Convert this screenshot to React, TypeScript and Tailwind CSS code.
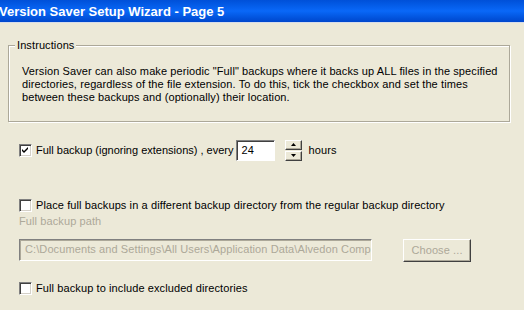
import { useState } from "react"

function Check({ checked, onClick }: { checked: boolean; onClick?: () => void }) {
    return (
        <button
            onClick={onClick}
            className="w-[13px] h-[13px] shrink-0 bg-white border border-t-[#808080] border-l-[#808080] border-b-white border-r-white shadow-[inset_1px_1px_0_#404040,inset_-1px_-1px_0_#d4d0c8] flex items-center justify-center"
        >
            {checked && (
                <svg width="7" height="7" viewBox="0 0 7 7">
                    <path d="M0 2 L2 4 L6 0 L6 2 L2 6 L0 4 Z" fill="#000" />
                </svg>
            )}
        </button>
    )
}

function Arrow({ up }: { up?: boolean }) {
    return (
        <svg width="5" height="3" viewBox="0 0 5 3">
            <path d={up ? "M2.5 0 L5 3 L0 3 Z" : "M0 0 L5 0 L2.5 3 Z"} fill="#000" />
        </svg>
    )
}

function App() {
    const [full, setFull] = useState(true)
    const [other, setOther] = useState(false)
    const [excl, setExcl] = useState(false)

    return (
        <div className="w-[524px] h-[310px] overflow-hidden bg-[#ece9d8] text-[11px] leading-[13px] tracking-[0.1px] text-black font-['Liberation_Sans',Arial,sans-serif]">
            <div className="h-[22px] bg-gradient-to-b from-[#0050d8] via-[#0a68f8] to-[#0046cc] flex items-center">
                <h1 className="ml-[-1px] text-white text-[13px] font-bold tracking-normal whitespace-nowrap">
                    Version Saver Setup Wizard - Page 5
                </h1>
            </div>
            <div className="h-px bg-[#d6dcea]" />

            <div className="relative mt-[22px] ml-[8px] w-[502px] h-[77px] border border-[#aca899] shadow-[1px_1px_0_#fff,inset_1px_1px_0_#fff] pt-[19px] pl-[13px]">
                <span className="absolute left-[6px] top-[-7px] px-[2px] bg-[#ece9d8]">Instructions</span>
                <p>
                    Version Saver can also make periodic "Full" backups where it backs up ALL files in the specified<br />
                    directories, regardless of the file extension. To do this, tick the checkbox and set the times<br />
                    between these backups and (optionally) their location.
                </p>
            </div>

            <div className="mt-[17px] ml-[19px] h-[22px] flex items-center">
                <Check checked={full} onClick={() => setFull(!full)} />
                <span className="ml-[4px] tracking-normal">Full backup (ignoring extensions) , every</span>
                <div className="ml-[3px] w-[39px] h-[21px] bg-white border border-t-[#808080] border-l-[#808080] border-b-white border-r-white shadow-[inset_1px_1px_0_#404040] pl-[4px] flex items-center">
                    24
                </div>
                <div className="ml-[10px] flex flex-col gap-px">
                    <div className="w-[17px] h-[10px] bg-[#ece9d8] border border-t-white border-l-white border-b-[#404040] border-r-[#404040] shadow-[inset_-1px_-1px_0_#aca899] flex items-center justify-center">
                        <Arrow up />
                    </div>
                    <div className="w-[17px] h-[10px] bg-[#ece9d8] border border-t-white border-l-white border-b-[#404040] border-r-[#404040] shadow-[inset_-1px_-1px_0_#aca899] flex items-center justify-center">
                        <Arrow />
                    </div>
                </div>
                <span className="ml-[6px]">hours</span>
            </div>

            <div className="mt-[38px] ml-[19px] flex items-center">
                <Check checked={other} onClick={() => setOther(!other)} />
                <span className="ml-[4px]">Place full backups in a different backup directory from the regular backup directory</span>
            </div>

            <div className="mt-[3px] ml-[19px] text-[#aca899]">Full backup path</div>

            <div className="mt-[9px] ml-[19px] flex items-center">
                <div className="w-[353px] h-[22px] border border-t-[#808080] border-l-[#808080] border-b-white border-r-white shadow-[inset_1px_1px_0_#aca899] pl-[5px] flex items-center text-[#aca899] whitespace-nowrap overflow-hidden">
                    C:\Documents and Settings\All Users\Application Data\Alvedon Computing
                </div>
                <button className="ml-[31px] mt-[2px] w-[68px] h-[23px] border border-t-white border-l-white border-b-[#404040] border-r-[#404040] shadow-[inset_-1px_-1px_0_#aca899] text-[#aca899]">
                    Choose ...
                </button>
            </div>

            <div className="mt-[20px] ml-[19px] flex items-center">
                <Check checked={excl} onClick={() => setExcl(!excl)} />
                <span className="ml-[4px]">Full backup to include excluded directories</span>
            </div>
        </div>
    )
}

export default App
